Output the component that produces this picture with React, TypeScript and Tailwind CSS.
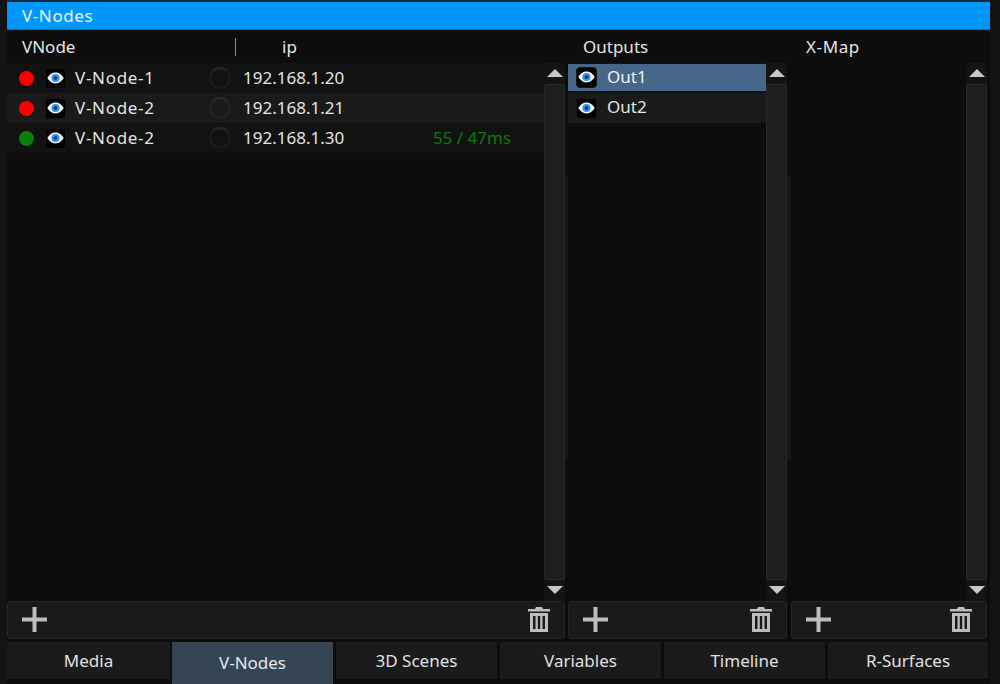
import type { ReactNode } from "react";

function Eye() {
  return (
    <div className="flex h-[21px] w-[21px] shrink-0 items-center justify-center rounded-[4px] border border-[#161616] bg-black">
      <svg width="17" height="12" viewBox="0 0 17 12">
        <path d="M0.3 6C3 1.8 5.8 0.6 8.5 0.6S14 1.8 16.7 6C14 10.2 11.2 11.4 8.5 11.4S3 10.2 0.3 6Z" fill="#f0f6fb" />
        <circle cx="8.5" cy="6" r="4" fill="#2b93ee" />
        <circle cx="8.5" cy="6" r="1.8" fill="#07335c" />
      </svg>
    </div>
  );
}

// faint colour wheel next to the ip
function Ring() {
  return (
    <svg width="24" height="24" viewBox="0 0 24 24" fill="none" strokeWidth="3" className="shrink-0">
      <path d="M5 5A10 10 0 0 1 19 5" stroke="#ffc850" strokeOpacity="0.09" />
      <path d="M19 5A10 10 0 0 1 19 19" stroke="#ff8060" strokeOpacity="0.06" />
      <path d="M19 19A10 10 0 0 1 5 19" stroke="#c060ff" strokeOpacity="0.07" />
      <path d="M5 19A10 10 0 0 1 5 5" stroke="#5090ff" strokeOpacity="0.08" />
    </svg>
  );
}

function Plus() {
  return (
    <svg width="25" height="25" viewBox="0 0 25 25">
      <path d="M10.5 0H14.5V10.5H25V14.5H14.5V25H10.5V14.5H0V10.5H10.5Z" fill="#bdbdbd" />
    </svg>
  );
}

function Trash() {
  return (
    <svg width="22" height="25" viewBox="0 0 22 25">
      <path d="M8 0H14L15 2H22V4.5H0V2H7Z" fill="#bdbdbd" />
      <path fillRule="evenodd" d="M2 6H20V25H2ZM5 9V22H7.5V9ZM9.8 9V22H12.2V9ZM14.5 9V22H17V9Z" fill="#bdbdbd" />
    </svg>
  );
}

function Scrollbar() {
  return (
    <div className="flex w-[21px] shrink-0 flex-col">
      <div className="flex h-[21px] items-center justify-center bg-[#141414] pb-[2px]">
        <div className="h-0 w-0 border-x-[8px] border-b-[8px] border-x-transparent border-b-[#c8c8c8]" />
      </div>
      <div className="flex-1 rounded-[2px] border border-[#2a2a2a] bg-[#1e1e1e]" />
      <div className="flex h-[21px] items-center justify-center bg-[#141414] pb-[2px]">
        <div className="h-0 w-0 border-x-[8px] border-t-[8px] border-x-transparent border-t-[#c8c8c8]" />
      </div>
    </div>
  );
}

function Stripe({ className }: { className: string }) {
  return (
    <div className={`shrink-0 pt-[112px] ${className}`}>
      <div className="h-[285px] bg-[#171717]" />
    </div>
  );
}

function Toolbar({ className }: { className: string }) {
  return (
    <div className={`flex h-[38px] items-center justify-between rounded-[3px] border border-[#262626] bg-[#1a1a1a] pb-px pl-[14px] pr-[14px] ${className}`}>
      <Plus />
      <Trash />
    </div>
  );
}

function Tab({ label, active, className = "w-[161px]" }: { label: string; active?: boolean; className?: string }) {
  return (
    <div
      className={
        active
          ? `flex h-[42px] items-center justify-center bg-[#364553] pb-[1px] text-[#e4e8ec] ${className}`
          : `flex h-[37px] items-center justify-center bg-[#1b1b1b] text-[#e0e0e0] ${className}`
      }
    >
      {label}
    </div>
  );
}

function NodeRow({ status, name, ip, bg, ping }: { status: string; name: string; ip: string; bg: string; ping?: ReactNode }) {
  return (
    <div className={`flex h-[30px] items-center pl-[12px] ${bg}`}>
      <div className={`h-[15px] w-[15px] rounded-full ${status}`} />
      <div className="ml-[11px]">
        <Eye />
      </div>
      <span className="ml-[9px] w-[133px] tracking-[0.7px] text-[#e4e4e4]">{name}</span>
      <Ring />
      <span className="ml-[11px] w-[190px] text-[#e4e4e4]">{ip}</span>
      <span className="text-[#0b7a0b]">{ping}</span>
    </div>
  );
}

export default function App() {
  return (
    <div className="h-[684px] w-[1000px] overflow-hidden bg-[#141414] pl-[7px] pr-[10px] font-['Noto_Sans',sans-serif] text-[17px] leading-[22px] text-[#e4e4e4]">
      <div className="flex h-full flex-col bg-[#0d0d0d]">
        <div className="flex h-[30px] shrink-0 items-center border-t-2 border-b border-t-[#0d2a3d] border-b-[#0a6fb8] bg-[#0096ff] pl-[15px] tracking-[0.6px] text-[#eaf6ff]">V-Nodes</div>

        <div className="flex h-[33px] shrink-0 items-center">
          <span className="ml-[15px] w-[213px]">VNode</span>
          <div className="h-[18px] w-px bg-[#8a8a8a]" />
          <span className="ml-[46px] w-[301px]">ip</span>
          <span className="w-[223px]">Outputs</span>
          <span className="tracking-[0.6px]">X-Map</span>
        </div>

        <div className="flex min-h-0 flex-1">
          <div className="flex w-[558px] shrink-0">
            <div className="flex-1">
              <NodeRow status="bg-[#ff0000]" name="V-Node-1" ip="192.168.1.20" bg="bg-[#121212]" />
              <NodeRow status="bg-[#ff0000]" name="V-Node-2" ip="192.168.1.21" bg="bg-[#1a1a1a]" />
              <NodeRow status="bg-[#0a800a]" name="V-Node-2" ip="192.168.1.30" bg="bg-[#121212]" ping="55 / 47ms" />
            </div>
            <Scrollbar />
          </div>
          <Stripe className="w-[3px]" />

          <div className="flex w-[219px] shrink-0">
            <div className="flex-1">
              <div className="flex h-[30px] items-center bg-[#121212] pb-[2px]">
                <div className="flex h-[27px] w-full items-center bg-[#466789] pl-[8px] text-[#f0f0f0]">
                  <Eye />
                  <span className="ml-[10px]">Out1</span>
                </div>
              </div>
              <div className="flex h-[30px] items-center bg-[#1a1a1a] pl-[8px]">
                <Eye />
                <span className="ml-[10px] -translate-y-px">Out2</span>
              </div>
            </div>
            <Scrollbar />
          </div>
          <Stripe className="w-[4px]" />

          <div className="flex w-[196px] shrink-0">
            <div className="flex-1" />
            <Scrollbar />
          </div>
        </div>

        <div className="flex shrink-0">
          <Toolbar className="w-[558px]" />
          <Toolbar className="ml-[3px] w-[219px]" />
          <Toolbar className="ml-[4px] w-[196px]" />
        </div>

        <div className="mt-[3px] flex h-[42px] shrink-0 items-start gap-[3px]">
          <Tab label="Media" className="-mr-px w-[163px]" />
          <Tab label="V-Nodes" active />
          <Tab label="3D Scenes" />
          <Tab label="Variables" />
          <Tab label="Timeline" />
          <Tab label="R-Surfaces" className="w-[160px]" />
        </div>
      </div>
    </div>
  );
}
